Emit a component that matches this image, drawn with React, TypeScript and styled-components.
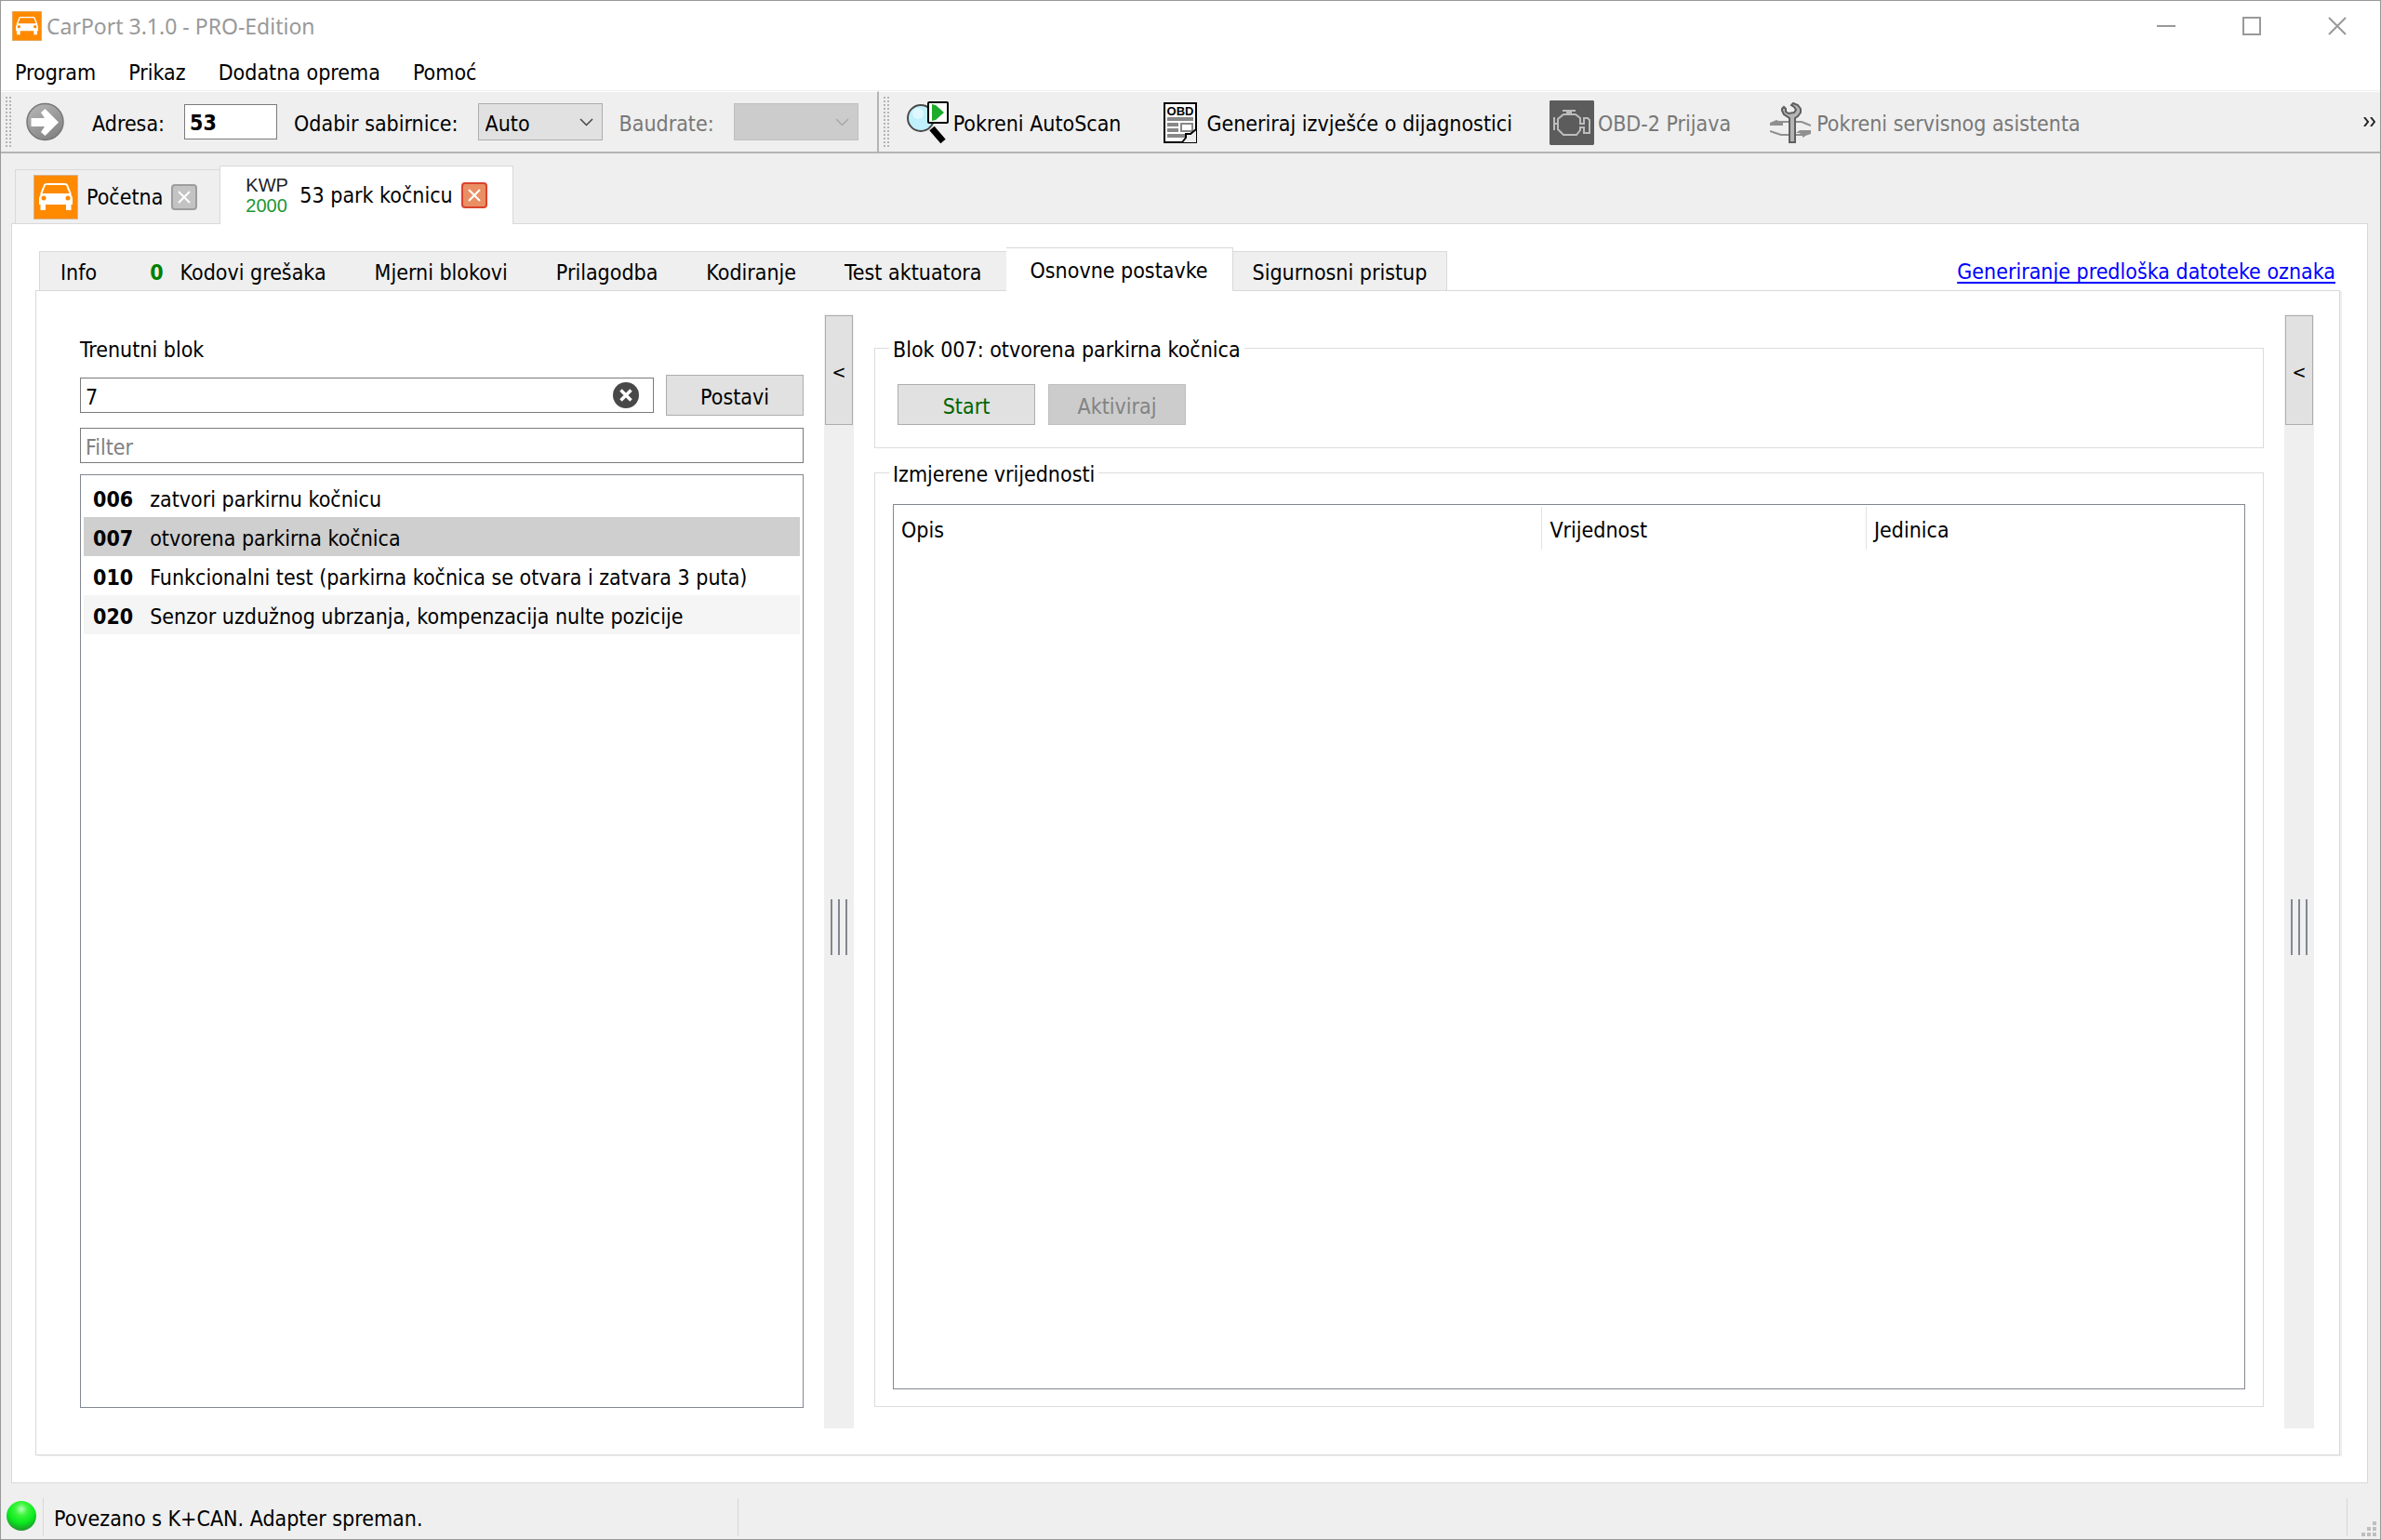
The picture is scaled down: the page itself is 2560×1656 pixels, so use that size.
import React, { useState } from "react";
import styled, { createGlobalStyle, css } from "styled-components";

const GlobalStyle = createGlobalStyle`
  *, *::before, *::after { box-sizing: border-box; }
  body {
    margin: 0;
    background: #efefef;
    color: #000;
    font: 23px/28px "DejaVu Sans Condensed", "DejaVu Sans", "Noto Sans", sans-serif;
  }
  button, input, select { font: inherit; color: inherit; margin: 0; border-radius: 0; }
`;

/* ---------- window frame ---------- */

const Window = styled.div`
  min-height: 100vh;
  display: flex;
  flex-direction: column;
  border: 1px solid #999;
  background: #efefef;
`;

const TitleBar = styled.header`
  height: 54px;
  display: flex;
  align-items: center;
  gap: 5px;
  padding-left: 12px;
  background: #fff;
`;

const Title = styled.h1`
  flex: 1;
  margin: 0;
  font: 23px/28px "Noto Sans", "Open Sans", sans-serif;
  color: #999;
`;

const CaptionButtons = styled.div`
  display: flex;
`;

const CaptionButton = styled.button`
  width: 92px;
  height: 54px;
  padding: 0;
  border: 0;
  background: none;
  display: grid;
  place-items: center;
`;

const MenuBar = styled.nav`
  height: 43px;
  display: flex;
  align-items: center;
  padding: 3px 5px 0;
  background: #fff;
  border-bottom: 1px solid #efefef;
`;

const MenuItem = styled.button`
  padding: 0 10px;
  margin-right: 15px;
  border: 0;
  background: none;
`;

/* ---------- toolbars ---------- */

const ToolbarArea = styled.div`
  display: flex;
  height: 67px;
`;

const Toolbar = styled.div<{ $grow?: boolean }>`
  display: flex;
  align-items: center;
  padding-left: 5px;
  border-top: 1px solid #fff;
  border-bottom: 2px solid #b4b4b4;
  ${(p) =>
    p.$grow
      ? css`flex: 1; padding-right: 5px;`
      : css`border-right: 2px solid #b4b4b4; padding-right: 20px;`}
`;

const Handle = styled.span`
  width: 7px;
  height: 54px;
  background-image: radial-gradient(circle at 1px 1px, #b4b4b4 1px, transparent 1px);
  background-size: 4px 4px;
`;

const GoButton = styled.button`
  margin: 0 30px 0 15px;
  padding: 0;
  border: 0;
  background: none;
  display: flex;
`;

const ToolLabel = styled.label<{ $dim?: boolean }>`
  padding: 3px 21px 0 0;
  white-space: nowrap;
  color: ${(p) => (p.$dim ? "#787878" : "#000")};
`;

const AddressInput = styled.input`
  width: 100px;
  height: 38px;
  margin-right: 18px;
  padding: 2px 5px 0;
  border: 1px solid #7a7a7a;
  background: #fff;
  font-weight: bold;
`;

const SelectBox = styled.span<{ $dim?: boolean }>`
  position: relative;
  display: flex;
  margin-right: ${(p) => (p.$dim ? 0 : 18)}px;
  color: ${(p) => (p.$dim ? "#a8a8a8" : "#444")};
  svg {
    position: absolute;
    right: 10px;
    top: 16px;
    pointer-events: none;
  }
`;

const Select = styled.select`
  appearance: none;
  width: 134px;
  height: 40px;
  padding: 3px 7px 0;
  border: 1px solid #adadad;
  background: #e1e1e1;
  color: #000;
  &:disabled {
    border-color: #bfbfbf;
    background: #ccc;
    opacity: 1;
  }
`;

const ToolButton = styled.button`
  display: flex;
  align-items: center;
  gap: 4px;
  height: 56px;
  margin: 0 24px 0 16px;
  padding: 2px 0 0;
  border: 0;
  background: none;
  white-space: nowrap;
  &:disabled { color: #787878; }
`;

const ToolIcon = styled.span`
  width: 48px;
  display: flex;
  justify-content: center;
`;

const ToolText = styled.span`
  padding-top: 2px;
`;

const Overflow = styled.button`
  margin-left: auto;
  padding: 0;
  border: 0;
  background: none;
  display: flex;
`;

/* ---------- document tabs ---------- */

const DocTabs = styled.div`
  display: flex;
  align-items: flex-end;
  height: 75px;
  padding: 12px 15px 0;
`;

const DocTab = styled.div<{ $active?: boolean }>`
  display: flex;
  align-items: center;
  gap: 9px;
  border: 1px solid #d9d9d9;
  border-bottom: 0;
  ${(p) =>
    p.$active
      ? css`
          height: 63px;
          margin-bottom: -1px;
          padding: 0 27px 0 26px;
          background: #fff;
          position: relative;
          z-index: 1;
        `
      : css`
          height: 58px;
          padding: 0 24px 0 19px;
          border-right: 0;
        `}
`;

const TabLabel = styled.button`
  display: flex;
  align-items: center;
  gap: 9px;
  padding: 0;
  border: 0;
  background: none;
  white-space: nowrap;
`;

const Protocol = styled.span`
  width: 50px;
  padding-left: 1px;
  display: flex;
  flex-direction: column;
  font: 20px/22px "Liberation Sans", Arial, sans-serif;
  text-align: left;
  color: #1c9632;
  b { font-weight: normal; color: #222; }
`;

const CloseTab = styled.button<{ $active?: boolean }>`
  width: 28px;
  height: 28px;
  padding: 0;
  border: 2px solid ${(p) => (p.$active ? "#d9432f" : "#9d9d9d")};
  border-radius: 4px;
  background: ${(p) => (p.$active ? "#e98f63" : "#c3c3c3")};
  display: grid;
  place-items: center;
`;

const DocPanel = styled.main`
  flex: 1;
  display: flex;
  flex-direction: column;
  margin: 0 13px 0 11px;
  padding: 24px 29px 29px 25px;
  border: 1px solid #d9d9d9;
  background: #fff;
`;

/* ---------- function tabs ---------- */

const FunctionBar = styled.div`
  display: flex;
  align-items: flex-end;
  height: 47px;
  padding: 0 5px 0 4px;
`;

const FunctionTab = styled.button<{ $active?: boolean }>`
  display: flex;
  align-items: center;
  gap: 18px;
  height: 42px;
  padding: 3px 26px 0;
  border: 1px solid #d9d9d9;
  border-width: 1px 0 0 1px;
  background: #efefef;
  white-space: nowrap;
  &:first-of-type { padding: 3px 22px 0; }
  &:last-of-type { border-right-width: 1px; padding: 3px 21px 0; }
  ${(p) =>
    p.$active &&
    css`
      height: 47px;
      padding: 1px 26px 0;
      margin-bottom: -1px;
      border-right-width: 1px;
      background: #fff;
      position: relative;
      z-index: 1;
      & + & { border-left-width: 0; }
    `}
`;

const Count = styled.b`
  color: #008000;
  margin-left: 9px;
`;

const TemplateLink = styled.a`
  margin-left: auto;
  margin-bottom: 6px;
  color: #00f;
  text-decoration: underline;
  text-decoration-thickness: 2px;
  text-underline-offset: 3px;
  text-decoration-skip-ink: none;
`;

const Workspace = styled.section`
  flex: 1;
  display: grid;
  grid-template-columns: minmax(0, 778fr) 32px minmax(0, 1494fr) 32px;
  column-gap: 22px;
  padding: 25px 27px 28px 47px;
  border: 1px solid #d9d9d9;
  box-shadow: 2px 1px 0 #efefef;
`;

/* ---------- block picker ---------- */

const Picker = styled.form`
  display: flex;
  flex-direction: column;
  padding: 24px 0 22px;
`;

const PickerRow = styled.div`
  display: flex;
  align-items: center;
  gap: 13px;
  margin: 13px 0;
`;

const Field = styled.div`
  flex: 1;
  display: flex;
  align-items: center;
  height: 38px;
  padding-right: 15px;
  border: 1px solid #7a7a7a;
`;

const BareInput = styled.input`
  flex: 1;
  min-width: 0;
  padding: 3px 5px 0;
  border: 0;
  background: none;
  outline: 0;
`;

const ClearButton = styled.button`
  padding: 0;
  border: 0;
  background: none;
  display: flex;
`;

const FilterInput = styled.input`
  height: 38px;
  padding: 3px 5px 0;
  border: 1px solid #7a7a7a;
  margin-bottom: 12px;
  &::placeholder { color: #808080; opacity: 1; }
`;

const PushButton = styled.button`
  width: 148px;
  height: 44px;
  padding: 3px 0 0;
  border: 1px solid #adadad;
  background: #e1e1e1;
  &:disabled {
    color: #838383;
    border-color: #bfbfbf;
    background: #ccc;
  }
`;

const StartButton = styled(PushButton)`
  color: #006400;
`;

const BlockList = styled.ul`
  flex: 1;
  margin: 0;
  padding: 3px;
  border: 1px solid #828790;
  list-style: none;
`;

const BlockRow = styled.li<{ $selected: boolean }>`
  display: flex;
  align-items: center;
  gap: 18px;
  height: 42px;
  padding: 3px 10px 0;
  cursor: default;
  white-space: nowrap;
  &:nth-child(even) { background: #f5f5f5; }
  && { ${(p) => p.$selected && "background: #cfcfcf;"} }
`;

/* ---------- splitter ---------- */

const SplitterTrack = styled.div`
  display: grid;
  grid-template-rows: 120px 1fr;
  padding: 1px 1px 0;
  background: #efefef;
`;

const CollapseButton = styled.button`
  height: 118px;
  padding: 4px 0 0;
  border: 1px solid #adadad;
  background: #e1e1e1;
  font-size: 20px;
`;

const GripArea = styled.span`
  display: flex;
  align-items: center;
  justify-content: center;
  padding-bottom: 2px;
`;

const Grip = styled.span`
  width: 18px;
  height: 60px;
  border: 2px solid #828790;
  border-width: 0 2px;
  display: grid;
  place-items: center;
  &::before {
    content: "";
    width: 2px;
    height: 60px;
    background: #828790;
  }
`;

/* ---------- measurement pane ---------- */

const Pane = styled.div`
  display: flex;
  flex-direction: column;
  gap: 12px;
  padding: 22px 0 23px;
`;

const Group = styled.fieldset<{ $fill?: boolean }>`
  display: flex;
  gap: 14px;
  min-width: 0;
  margin: 0;
  border: 1px solid #dcdcdc;
  ${(p) =>
    p.$fill
      ? css`flex: 1; padding: 20px 19px 18px;`
      : css`padding: 25px 24px 24px;`}
`;

const Legend = styled.legend<{ $inset: number }>`
  height: 28px;
  margin-left: -${(p) => p.$inset}px;
  padding: 2px 4px 0;
`;

const TableFrame = styled.div`
  flex: 1;
  border: 1px solid #828790;
  padding: 2px 0;
`;

const Table = styled.table`
  width: 100%;
  table-layout: fixed;
  border-collapse: collapse;
`;

const HeadCell = styled.th<{ $share: number }>`
  width: ${(p) => p.$share}%;
  height: 46px;
  padding: 3px 8px 0;
  font-weight: normal;
  text-align: left;
  border-right: 1px solid #e2e2e2;
  &:last-child { border-right: 0; }
`;

/* ---------- status bar ---------- */

const StatusBar = styled.footer`
  display: flex;
  height: 60px;
  padding: 16px 4px 3px 5px;
`;

const StatusCell = styled.div<{ $width?: number }>`
  ${(p) => (p.$width ? `width: ${p.$width}px;` : "flex: 1;")}
  display: flex;
  align-items: center;
  padding: 3px 0 0 11px;
  border-left: 1px solid #d7d7d7;
`;

const Lamp = styled.span`
  width: 40px;
  display: flex;
  align-items: center;
  padding-bottom: 3px;
`;

const SizeGrip = styled.span`
  width: 32px;
  display: flex;
  align-items: flex-end;
  justify-content: flex-end;
  border-left: 1px solid #d7d7d7;
`;

/* ---------- drawings ---------- */

const CarIcon = ({ size }: { size: number }) => (
  <svg width={size} height={size} viewBox="0 0 48 48" aria-hidden="true">
    <rect width="48" height="48" fill="#d8b48a" />
    <rect x="1" y="1" width="46" height="46" fill="#ff8a00" />
    <path d="M8 21 L12 11 Q12.400 10 14 10 H34 Q35.600 10 36 11 L40 21" fill="none" stroke="#fff" strokeWidth="2" />
    <path d="M9 20 H39 Q42 22 42 25 V32 H40.500 V38 H35 V32 H13 V38 H7.500 V32 H6 V25 Q6 22 9 20 Z" fill="#fff" />
    <circle cx="11" cy="25" r="2.500" fill="#ff8a00" />
    <circle cx="37" cy="25" r="2.500" fill="#ff8a00" />
  </svg>
);

const GoIcon = () => (
  <svg width="41" height="42" viewBox="0 0 41 42" aria-hidden="true">
    <defs>
      <linearGradient id="go" x1="0" y1="0" x2="0.600" y2="1">
        <stop offset="0" stopColor="#b9b9b9" />
        <stop offset="1" stopColor="#858585" />
      </linearGradient>
    </defs>
    <circle cx="20.500" cy="21" r="19.500" fill="url(#go)" stroke="#777" strokeWidth="1.500" />
    <path d="M5.500 17 H20 L16 11 L20.500 7 L35 21.500 L20.500 36 L16 32 L20 26 H5.500 Z" fill="#fff" />
  </svg>
);

const Chevron = () => (
  <svg width="15" height="9" viewBox="0 0 15 9" fill="none" stroke="currentColor" strokeWidth="1.500" aria-hidden="true">
    <path d="M1 1 L7.500 7.500 L14 1" />
  </svg>
);

const ScanIcon = () => (
  <svg width="46" height="46" viewBox="0 0 46 46" aria-hidden="true">
    <path d="M28 29 L40 43" stroke="#000" strokeWidth="7" />
    <circle cx="16" cy="18" r="14" fill="#bff0fc" stroke="#4a4a4a" strokeWidth="2" />
    <circle cx="13" cy="13" r="6" fill="#dff8ff" />
    <rect x="24" y="1" width="21" height="22" rx="1" fill="#fff" stroke="#000" strokeWidth="2" />
    <path d="M28 3 L32 4 L41 12 L32 20 L28 21 Z" fill="#1cab2c" />
  </svg>
);

const ReportIcon = () => (
  <svg width="36" height="44" viewBox="0 0 36 44" aria-hidden="true">
    <rect x="1" y="1" width="34" height="42" fill="#fff" stroke="#000" strokeWidth="2" />
    <text x="18" y="14" textAnchor="middle" fontFamily="Liberation Sans" fontWeight="bold" fontSize="13">OBD</text>
    <path d="M4 18 H32 M4 24 H16 M4 30 H16 M4 36 H24" stroke="#888" strokeWidth="4" />
    <rect x="19" y="23" width="12" height="8" fill="#fff" stroke="#888" strokeWidth="2" />
    <path d="M20 43 L25 37 V34 L35 30 V43 Z" fill="#eee" />
    <path d="M20 43 L24 38 V34 H29 L35 29" fill="none" stroke="#000" strokeWidth="2" />
  </svg>
);

const EngineIcon = () => (
  <svg width="48" height="48" viewBox="0 0 24 24" fill="none" stroke="#bdbdbd" aria-hidden="true">
    <rect width="24" height="24" rx="0.700" fill="#5c5c5c" stroke="none" />
    <path d="M7 5.500 H14 M9 6.500 H12" />
    <path d="M4.500 12.500 V10 L7.500 7.500 H14 L16.500 9.500 V12.500 H18.500 V9.500 H20.500 L21.500 10.500 V17.500 H18.500 V14.500 H16.500 V16 L14.500 18.500 H7.500 L4.500 15.500 V12.500 M2.500 9 V16 M2.500 12.500 H4.500" />
  </svg>
);

const WrenchIcon = () => (
  <svg width="44" height="44" viewBox="0 0 22 22" fill="none" stroke="#909090" aria-hidden="true">
    <path d="M4 10.500 H17 L19.500 11.500 L22 12.500" />
    <path d="M0 11 L3.500 9.500 L7 11 V12.500 H0 Z" fill="#909090" stroke="none" />
    <path d="M0 15.500 L3 16.500 L6 17.500 H18" />
    <path d="M22 15 H16 L14 16.500 H16 L18 19 L19 18 L22 17 Z" fill="#909090" stroke="none" />
    <path
      d="M10.500 21.500 V8.500 L7.500 6.500 L6.500 4.500 V3.500 L7.500 2.500 L8.500 3.500 V5 L10 6 L13 5.500 L14 4 L13 2.500 L11.500 1.500 L12.500 0.500 L15 1.500 L16.500 3.500 V5.500 L15 7.500 L13.500 8.500 V21.500 Z"
      fill="#b4b4b4"
      stroke="#5f5f5f"
    />
  </svg>
);

const ClearIcon = () => (
  <svg width="28" height="28" viewBox="0 0 28 28" aria-hidden="true">
    <circle cx="14" cy="14" r="14" fill="#484848" />
    <path d="M8.500 8.500 L19.500 19.500 M19.500 8.500 L8.500 19.500" stroke="#fff" strokeWidth="3.500" />
  </svg>
);

const CrossIcon = () => (
  <svg width="16" height="16" viewBox="0 0 16 16" stroke="#fff" strokeWidth="2" aria-hidden="true">
    <path d="M2 2 L14 14 M14 2 L2 14" />
  </svg>
);

const LampIcon = () => (
  <svg width="34" height="34" viewBox="0 0 34 34" aria-hidden="true">
    <defs>
      <radialGradient id="lamp" cx="0.500" cy="0.280" r="0.700">
        <stop offset="0" stopColor="#b4ffb4" />
        <stop offset="0.300" stopColor="#3cf53c" />
        <stop offset="0.650" stopColor="#0aea1e" />
        <stop offset="1" stopColor="#1f9a2c" />
      </radialGradient>
    </defs>
    <circle cx="17" cy="17" r="16" fill="url(#lamp)" />
  </svg>
);

const captionDrawings = [
  { name: "Minimize", path: "M0 10 H20" },
  { name: "Maximize", path: "M1 1 H19 V19 H1 Z" },
  { name: "Close", path: "M1 1 L19 19 M19 1 L1 19" },
];

/* ---------- content ---------- */

const menus = ["Program", "Prikaz", "Dodatna oprema", "Pomoć"];

const tools = [
  { label: "Pokreni AutoScan", Icon: ScanIcon, enabled: true },
  { label: "Generiraj izvješće o dijagnostici", Icon: ReportIcon, enabled: true },
  { label: "OBD-2 Prijava", Icon: EngineIcon, enabled: false },
  { label: "Pokreni servisnog asistenta", Icon: WrenchIcon, enabled: false },
];

const functions = [
  { label: "Info" },
  { label: "Kodovi grešaka", count: 0 },
  { label: "Mjerni blokovi" },
  { label: "Prilagodba" },
  { label: "Kodiranje" },
  { label: "Test aktuatora" },
  { label: "Osnovne postavke" },
  { label: "Sigurnosni pristup" },
];

const blocks = [
  { id: "006", text: "zatvori parkirnu kočnicu" },
  { id: "007", text: "otvorena parkirna kočnica" },
  { id: "010", text: "Funkcionalni test (parkirna kočnica se otvara i zatvara 3 puta)" },
  { id: "020", text: "Senzor uzdužnog ubrzanja, kompenzacija nulte pozicije" },
];

const Splitter = ({ name }: { name: string }) => (
  <SplitterTrack>
    <CollapseButton type="button" aria-label={name}>&lt;</CollapseButton>
    <GripArea><Grip /></GripArea>
  </SplitterTrack>
);

export default function App() {
  const [active, setActive] = useState("Osnovne postavke");
  const [block, setBlock] = useState("7");
  const [filter, setFilter] = useState("");
  const selected = block.padStart(3, "0");
  const current = blocks.find((b) => b.id === selected);

  return (
    <>
      <GlobalStyle />
      <Window>
        <TitleBar>
          <CarIcon size={32} />
          <Title>CarPort 3.1.0 - PRO-Edition</Title>
          <CaptionButtons>
            {captionDrawings.map((c) => (
              <CaptionButton key={c.name} aria-label={c.name}>
                <svg width="20" height="20" viewBox="0 0 20 20" fill="none" stroke="#999" strokeWidth="2">
                  <path d={c.path} />
                </svg>
              </CaptionButton>
            ))}
          </CaptionButtons>
        </TitleBar>

        <MenuBar>
          {menus.map((m) => (
            <MenuItem key={m}>{m}</MenuItem>
          ))}
        </MenuBar>

        <ToolbarArea>
          <Toolbar>
            <Handle />
            <GoButton aria-label="Otvori"><GoIcon /></GoButton>
            <ToolLabel htmlFor="address">Adresa:</ToolLabel>
            <AddressInput id="address" defaultValue="53" />
            <ToolLabel htmlFor="bus">Odabir sabirnice:</ToolLabel>
            <SelectBox>
              <Select id="bus"><option>Auto</option></Select>
              <Chevron />
            </SelectBox>
            <ToolLabel htmlFor="baud" $dim>Baudrate:</ToolLabel>
            <SelectBox $dim>
              <Select id="baud" disabled />
              <Chevron />
            </SelectBox>
          </Toolbar>
          <Toolbar $grow>
            <Handle />
            {tools.map(({ label, Icon, enabled }) => (
              <ToolButton key={label} disabled={!enabled}>
                <ToolIcon><Icon /></ToolIcon>
                <ToolText>{label}</ToolText>
              </ToolButton>
            ))}
            <Overflow aria-label="Više">
              <svg width="13" height="10" viewBox="0 0 13 10" fill="none" stroke="#222" strokeWidth="2">
                <path d="M1 0 L5 5 L1 10 M8 0 L12 5 L8 10" />
              </svg>
            </Overflow>
          </Toolbar>
        </ToolbarArea>

        <DocTabs>
          <DocTab>
            <TabLabel><CarIcon size={48} />Početna</TabLabel>
            <CloseTab aria-label="Zatvori Početna"><CrossIcon /></CloseTab>
          </DocTab>
          <DocTab $active>
            <TabLabel><Protocol><b>KWP</b>2000</Protocol>53 park kočnicu</TabLabel>
            <CloseTab $active aria-label="Zatvori 53 park kočnicu"><CrossIcon /></CloseTab>
          </DocTab>
        </DocTabs>

        <DocPanel>
          <FunctionBar>
            {functions.map((f) => (
              <FunctionTab key={f.label} $active={f.label === active} onClick={() => setActive(f.label)}>
                {f.count !== undefined && <Count>{f.count}</Count>}
                {f.label}
              </FunctionTab>
            ))}
            <TemplateLink href="#predlozak">Generiranje predloška datoteke oznaka</TemplateLink>
          </FunctionBar>

          <Workspace>
            <Picker onSubmit={(e) => e.preventDefault()}>
              <label htmlFor="block">Trenutni blok</label>
              <PickerRow>
                <Field>
                  <BareInput id="block" value={block} onChange={(e) => setBlock(e.target.value)} />
                  <ClearButton type="button" aria-label="Obriši" onClick={() => setBlock("")}><ClearIcon /></ClearButton>
                </Field>
                <PushButton>Postavi</PushButton>
              </PickerRow>
              <FilterInput aria-label="Filter" placeholder="Filter" value={filter} onChange={(e) => setFilter(e.target.value)} />
              <BlockList>
                {blocks
                  .filter((b) => (b.id + b.text).toLowerCase().includes(filter.toLowerCase()))
                  .map((b) => (
                    <BlockRow key={b.id} $selected={b.id === selected} onClick={() => setBlock(String(Number(b.id)))}>
                      <b>{b.id}</b>
                      {b.text}
                    </BlockRow>
                  ))}
              </BlockList>
            </Picker>

            <Splitter name="Sakrij blokove" />

            <Pane>
              <Group>
                <Legend $inset={9}>Blok {selected}: {current?.text}</Legend>
                <StartButton type="button">Start</StartButton>
                <PushButton type="button" disabled>Aktiviraj</PushButton>
              </Group>
              <Group $fill>
                <Legend $inset={4}>Izmjerene vrijednosti</Legend>
                <TableFrame>
                  <Table>
                    <thead>
                      <tr>
                        <HeadCell $share={48}>Opis</HeadCell>
                        <HeadCell $share={24}>Vrijednost</HeadCell>
                        <HeadCell $share={28}>Jedinica</HeadCell>
                      </tr>
                    </thead>
                  </Table>
                </TableFrame>
              </Group>
            </Pane>

            <Splitter name="Prikaži grafikon" />
          </Workspace>
        </DocPanel>

        <StatusBar>
          <Lamp><LampIcon /></Lamp>
          <StatusCell $width={747}>Povezano s K+CAN. Adapter spreman.</StatusCell>
          <StatusCell />
          <SizeGrip>
            <svg width="16" height="16" viewBox="0 0 16 16" fill="#bfbfbf">
              <path d="M12 0h4v4h-4z M6 6h4v4h-4z M12 6h4v4h-4z M0 12h4v4h-4z M6 12h4v4h-4z M12 12h4v4h-4z" />
            </svg>
          </SizeGrip>
        </StatusBar>
      </Window>
    </>
  );
}
